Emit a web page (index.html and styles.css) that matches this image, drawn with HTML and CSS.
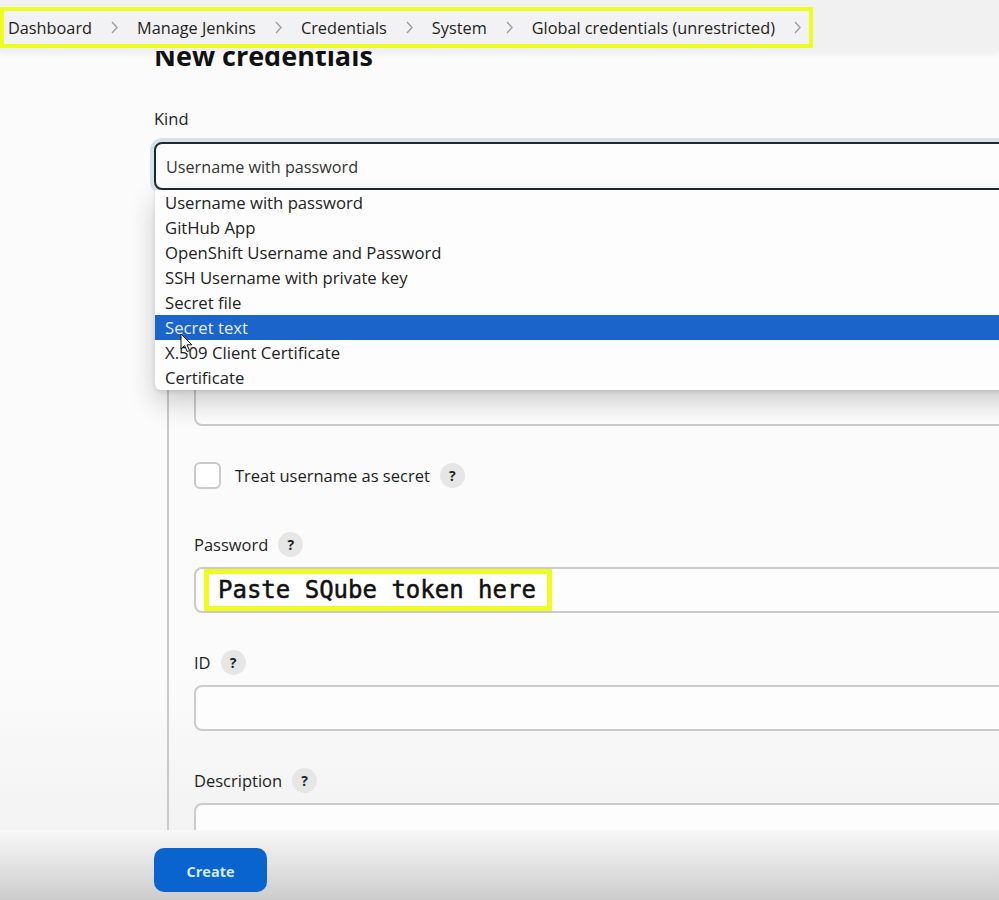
FILE: index.html
```html
<!DOCTYPE html>
<html lang="en">
<head>
<meta charset="utf-8">
<title>New credentials</title>
<link rel="stylesheet" href="styles.css">
</head>
<body>
<header class="topbar">
  <nav class="crumbs">
    <span class="crumb">Dashboard</span>
    <svg class="chev" viewBox="0 0 7 13"><path d="M1 1 L6 6.5 L1 12"/></svg>
    <span class="crumb">Manage Jenkins</span>
    <svg class="chev" viewBox="0 0 7 13"><path d="M1 1 L6 6.5 L1 12"/></svg>
    <span class="crumb">Credentials</span>
    <svg class="chev" viewBox="0 0 7 13"><path d="M1 1 L6 6.5 L1 12"/></svg>
    <span class="crumb">System</span>
    <svg class="chev" viewBox="0 0 7 13"><path d="M1 1 L6 6.5 L1 12"/></svg>
    <span class="crumb">Global credentials (unrestricted)</span>
    <svg class="chev last" viewBox="0 0 7 13"><path d="M1 1 L6 6.5 L1 12"/></svg>
  </nav>
</header>

<main class="page">
  <h1 class="title">New credentials</h1>
  <div class="kind-label">Kind</div>
  <div class="select-wrap">
    <div class="select">Username with password</div>
    <ul class="dropdown">
      <li>Username with password</li>
      <li>GitHub App</li>
      <li>OpenShift Username and Password</li>
      <li>SSH Username with private key</li>
      <li>Secret file</li>
      <li class="active">Secret text</li>
      <li>X.509 Client Certificate</li>
      <li>Certificate</li>
      <svg class="cursor" viewBox="0 0 13 20"><path d="M1 1 L1 16 L4.6 12.6 L7.2 18.6 L9.6 17.6 L7 11.8 L11.8 11.8 Z"/></svg>
    </ul>
  </div>

  <section class="panel">
    <div class="field">
      <div class="field-label"></div>
      <div class="input"></div>
    </div>
    <div class="field gap36">
      <div class="field-label"></div>
      <div class="input"></div>
    </div>
    <div class="check-row">
      <span class="checkbox"></span>
      <span class="check-text">Treat username as secret</span>
      <span class="help">?</span>
    </div>
    <div class="field gap43">
      <div class="field-label">Password <span class="help">?</span></div>
      <div class="input token-input"><span class="token">Paste SQube token here</span></div>
    </div>
    <div class="field gap37">
      <div class="field-label">ID <span class="help">?</span></div>
      <div class="input"></div>
    </div>
    <div class="field gap37">
      <div class="field-label">Description <span class="help">?</span></div>
      <div class="input textarea"></div>
    </div>
  </section>
</main>

<footer class="bottombar">
  <button class="create" type="button">Create</button>
</footer>
</body>
</html>
```

FILE: styles.css
```css
html {
  overflow: hidden;
  height: 100%;
  background: linear-gradient(#fbfbfb 75%, #efefef);
}

body {
  margin: 0;
  font-family: "Open Sans", "Noto Sans", sans-serif;
  color: #1f1f1f;
}

/* ---------- breadcrumb header ---------- */
.topbar {
  position: fixed;
  top: 0;
  left: 0;
  right: 0;
  height: 51px;
  background: #f1f1f2;
  box-shadow: 0 3px 6px rgba(0, 0, 0, 0.05);
  z-index: 10;
}

.crumbs {
  display: inline-flex;
  align-items: center;
  box-sizing: border-box;
  height: 41px;
  margin-top: 7px;
  padding: 0 8px 0 4px;
  border: 4px solid #eefd20;
  background: #f2f2f4;
}

.crumb {
  font-size: 16.3px;
  color: #222;
  white-space: nowrap;
}

.chev {
  width: 7px;
  height: 13px;
  margin: 0 19px;
  fill: none;
  stroke: #9d9d9d;
  stroke-width: 1.4;
}

.chev.last {
  margin-right: 0;
}

/* ---------- page ---------- */
.page {
  width: 1100px;
  padding: 40px 0 0 154px;
}

.title {
  margin: 0;
  font-size: 27px;
  line-height: 32px;
  font-weight: 700;
  color: #111;
}

.kind-label {
  margin-top: 35px;
  font-size: 16.5px;
  line-height: 24px;
}

.select-wrap {
  position: relative;
  margin-top: 11px;
}

.select {
  display: flex;
  align-items: center;
  box-sizing: border-box;
  height: 48px;
  padding: 2px 0 0 10px;
  border: 2px solid #1d2a31;
  border-radius: 8px;
  background: #fdfdfd;
  box-shadow: 0 0 0 4px #d5e3e8;
  font-size: 16.2px;
  color: #333;
}

.dropdown {
  position: absolute;
  top: 48px;
  left: 1px;
  right: 0;
  margin: 0;
  padding: 0;
  list-style: none;
  background: #fdfdfd;
  border-radius: 0 0 6px 6px;
  box-shadow: 0 12px 28px rgba(0, 0, 0, 0.2), 0 2px 4px rgba(0, 0, 0, 0.1);
  z-index: 5;
}

.dropdown li {
  height: 25px;
  line-height: 25px;
  padding-left: 10px;
  font-size: 16.7px;
  color: #222;
}

.dropdown li.active {
  background: #1b64c9;
  color: #e4eeff;
}

.cursor {
  position: absolute;
  left: 25px;
  top: 143px;
  width: 13px;
  height: 20px;
  fill: #fff;
  stroke: #111;
  stroke-width: 1;
  stroke-linejoin: round;
}

/* ---------- form panel ---------- */
.panel {
  margin: 10px 0 0 13px;
  padding: 28px 0 0 25px;
  border-left: 2px solid #c9c9c9;
}

.field-label {
  display: flex;
  align-items: center;
  gap: 10px;
  height: 24px;
  font-size: 16.5px;
}

.help {
  display: inline-flex;
  align-items: center;
  justify-content: center;
  width: 25px;
  height: 25px;
  border-radius: 50%;
  background: #e6e6e6;
  font-size: 14px;
  font-weight: 700;
  color: #222;
}

.input {
  box-sizing: border-box;
  height: 46px;
  margin-top: 11px;
  border: 2px solid #cbcbcb;
  border-radius: 8px;
  background: #fdfdfd;
}

.textarea {
  height: 120px;
}

.gap36 { margin-top: 36px; }
.gap43 { margin-top: 43px; }
.gap37 { margin-top: 37px; }

.check-row {
  display: flex;
  align-items: center;
  height: 27px;
  margin-top: 36px;
}

.checkbox {
  box-sizing: border-box;
  width: 27px;
  height: 27px;
  border: 2px solid #cacaca;
  border-radius: 6px;
  background: #fff;
}

.check-text {
  margin: 0 10px 0 14px;
  font-size: 16.5px;
}

.token-input {
  display: flex;
  align-items: stretch;
}

.token {
  display: inline-flex;
  align-items: center;
  box-sizing: border-box;
  margin-left: 8px;
  padding: 0 11px 0 9px;
  border: 5px solid #eefd20;
  background: #fff;
  font-family: "DejaVu Sans Mono", monospace;
  font-size: 24px;
  color: #111;
  -webkit-text-stroke: 0.5px #111;
  white-space: nowrap;
}

/* ---------- bottom bar ---------- */
.bottombar {
  position: fixed;
  left: 0;
  right: 0;
  bottom: 0;
  box-sizing: border-box;
  height: 70px;
  padding: 18px 0 0 154px;
  background: linear-gradient(#f8f8f8, #cccccc);
  z-index: 10;
}

.create {
  width: 113px;
  height: 44px;
  padding-top: 4px;
  border: none;
  border-radius: 10px;
  background: #0a64cf;
  color: #d4ebff;
  font-family: "Open Sans", "Noto Sans", sans-serif;
  font-size: 14.5px;
  font-weight: 700;
}
```
